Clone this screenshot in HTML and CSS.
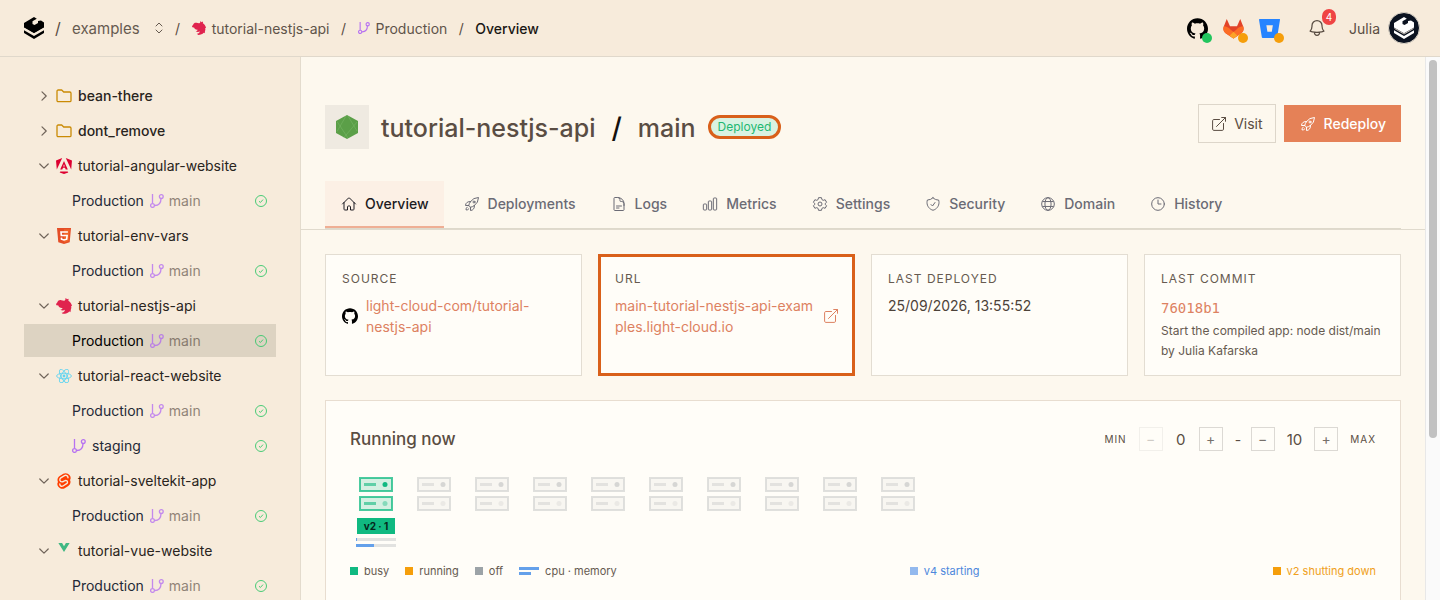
FILE: index.html
```html
<!DOCTYPE html>
<html lang="en">
<head>
<meta charset="utf-8">
<title>tutorial-nestjs-api / main - Overview</title>
<link rel="stylesheet" href="styles.css">
</head>
<body>
<svg class="sprite" aria-hidden="true">
  <symbol id="brand" viewBox="0 0 20 22">
    <path d="M10 0l2.800 1.700-4.300 2.600v2.600l2 1.200 3.500-2v-2l3-.6 3 2v5l-10 5.700-10-5.700V6z"/>
    <path d="M0 13.200l10 5.700 10-5.700v2.900L10 22 0 16.100z"/>
    <path class="brand-cut" d="M.5 11.500l9.500 5.500 9.500-5.500" fill="none" stroke-width=".8"/>
  </symbol>
  <symbol id="nest" viewBox="0 0 24 24"><path d="M0 9.500C.3 8 1.500 7.500 2.200 6 3 3.500 5.500 2.500 8 3.200c1.500.4 2.700 1 4.500.8C14 3.800 14.500 2 14 .5c1 0 2 .6 2.300 1.500L18.500 1c.6 1 .5 2 0 3C21.500 5.500 23.500 8.500 24 12c-.5-.2-1-.2-1.300 0 .5 2 .3 4-.5 5.500 0 1.500-.2 2.500-.7 3.700-.4-.5-.8-.9-1.500-1-2 2.300-5 3.600-9.500 3.600-.8-.5-1.500-1-2-1.800 3-.4 4.800-2 4.700-4.500-1.700 1.700-4.700 1.500-6.700 0 1.800-.2 3-1 3.200-2.500C6.500 15.500 4 13.500 3.500 11.200 2 11.500.5 11 0 9.500z"/></symbol>
  <symbol id="branch" viewBox="0 0 14 14"><g fill="none" stroke="currentColor" stroke-width="1.300"><path d="M2.500 0v9.300M4.700 11.500c4 0 6.300-2.500 6.300-7"/><circle cx="2.500" cy="11.500" r="1.900"/><circle cx="11.300" cy="2.600" r="1.900"/></g></symbol>
  <symbol id="github" viewBox="0 0 24 24"><path d="M12 .297c-6.630 0-12 5.373-12 12 0 5.303 3.438 9.800 8.205 11.385.6.113.82-.258.82-.577 0-.285-.01-1.040-.015-2.040-3.338.724-4.042-1.610-4.042-1.610C4.422 18.070 3.633 17.700 3.633 17.700c-1.087-.744.084-.729.084-.729 1.205.084 1.838 1.236 1.838 1.236 1.070 1.835 2.809 1.305 3.495.998.108-.776.417-1.305.76-1.605-2.665-.3-5.466-1.332-5.466-5.930 0-1.310.465-2.380 1.235-3.220-.135-.303-.54-1.523.105-3.176 0 0 1.005-.322 3.300 1.230.96-.267 1.980-.399 3-.405 1.020.006 2.040.138 3 .405 2.280-1.552 3.285-1.230 3.285-1.230.645 1.653.24 2.873.12 3.176.765.84 1.230 1.910 1.230 3.220 0 4.610-2.805 5.625-5.475 5.920.42.36.81 1.096.81 2.220 0 1.606-.015 2.896-.015 3.286 0 .315.21.69.825.57C20.565 22.092 24 17.592 24 12.297c0-6.627-5.373-12-12-12"/></symbol>
  <symbol id="gitlab" viewBox="0 0 24 24"><path fill="#e24329" d="M4.300 1L8 9.500h8L19.700 1 23 9.500c1.200 3 .5 6-2 8L12 23.500 3 17.500c-2.500-2-3.200-5-2-8z"/><path fill="#fc6d26" d="M1 9.500c3 0 5.500 1.500 7.500 3.500L12 16l3.500-3c2-2 4.500-3.500 7.500-3.500 1.200 3 .5 6-2 8L12 23.500 3 17.500c-2.500-2-3.200-5-2-8z"/><path fill="#fca326" d="M12 15.700l4.600 4.700L12 23.500l-4.600-3.100z"/></symbol>
  <symbol id="bitbucket" viewBox="0 0 20 18"><path fill="#2684ff" fill-rule="evenodd" d="M.6 0h18.800c.4 0 .7.300.6.7l-2.700 16.700c-.1.400-.3.600-.7.600H3.500c-.4 0-.7-.2-.8-.6L0 .7C0 .3.200 0 .6 0zM7 6l1 6h4.200l1-6z"/></symbol>
  <symbol id="folder" viewBox="0 0 16 14"><path fill="none" stroke="currentColor" stroke-width="1.300" stroke-linejoin="round" d="M1 11.500V2.200C1 1.500 1.500 1 2.200 1h3.500l2 2h6.100c.7 0 1.200.5 1.200 1.200v7.300c0 .7-.5 1.200-1.200 1.200H2.200c-.7 0-1.200-.5-1.200-1.200z"/></symbol>
  <symbol id="chevron" viewBox="0 0 10 10"><path fill="none" stroke="currentColor" stroke-width="1.200" stroke-linecap="round" stroke-linejoin="round" d="M.8 3l4.200 4.200L9.200 3"/></symbol>
  <symbol id="angular" viewBox="0 0 16 16"><path fill="#dd0031" d="M9.800 0L16 2.500l-.8 9zM6.200 0L0 2.500l.8 9zM4.300 13.500h7.400l.6 1L8 16l-4.300-1.500z"/><path fill="#dd0031" fill-rule="evenodd" d="M8 3l3.800 8.500H9.700L9 9.800H7l-.7 1.700H4.200zM8 6.200L7.200 8.400h1.600z"/></symbol>
  <symbol id="html5" viewBox="0 0 14 16"><path fill="#e44d26" d="M0 0h14l-1.300 14.300L7 16l-5.700-1.700z"/><path fill="#f16529" d="M7 1.300h5.700l-1.100 12L7 14.600z"/><path fill="none" stroke="#fff" stroke-width="1.600" d="M10.900 4H4l.3 3.500h5.800l-.4 3.700L7 12l-2.500-.8-.1-1.600"/></symbol>
  <symbol id="react" viewBox="0 0 16 14"><g fill="none" stroke="#61d4f0" stroke-width=".9"><ellipse cx="8" cy="7" rx="7.400" ry="2.800"/><ellipse cx="8" cy="7" rx="7.400" ry="2.800" transform="rotate(60 8 7)"/><ellipse cx="8" cy="7" rx="7.400" ry="2.800" transform="rotate(120 8 7)"/></g><circle cx="8" cy="7" r="1.400" fill="#61d4f0"/></symbol>
  <symbol id="svelte" viewBox="0 0 14 16"><path fill="#ff3e00" d="M12.600 2.200C11.200.2 8.300-.4 6.300.8L2.700 3.100C1.200 4 .4 5.600.5 7.200c.1.700.2 1.300.5 1.800-1 1.300-.9 3.300.4 4.800 1.400 2 4.300 2.600 6.300 1.400l3.600-2.300c1.500-.9 2.300-2.500 2.200-4.100-.1-.7-.2-1.300-.5-1.800 1-1.300.9-3.300-.4-4.800z"/><path fill="none" stroke="#f7ebdb" stroke-width="1.400" stroke-linecap="round" d="M11 4.700c0-1.800-1.900-2.900-3.500-2.100L3.800 4.900C2 6.200 2.800 8.800 4.900 8.900c1 0 1.700-.5 2.400-.9 1.400-.9 3.300-.4 3.200 1.200 0 .8-.4 1.200-.9 1.500L6 13c-1.500.8-3.300 0-3.200-2"/></symbol>
  <symbol id="vue" viewBox="0 0 10 8"><path fill="#41b883" d="M0 0h3.300L5 2.800 6.700 0H10L5 8z"/></symbol>
  <symbol id="check" viewBox="0 0 14 14"><g fill="none" stroke="currentColor" stroke-width=".9"><circle cx="7" cy="7" r="5.500"/><path d="M5 7.200l1.400 1.300 2.600-2.900"/></g></symbol>
  <symbol id="node" viewBox="0 0 22 24"><path fill="#5b9f48" d="M11 0l11 6v12l-11 6-11-6V6z"/><path fill="none" stroke="#7db96b" stroke-width=".5" d="M12 1l9 15M1 6.500l11 16.500M21 7L8 22.500M10 1L1 16.500"/></symbol>
  <symbol id="external" viewBox="0 0 14 14"><path fill="none" stroke="currentColor" stroke-width="1" stroke-linecap="round" stroke-linejoin="round" d="M7.500 2.500H1.800c-.7 0-1.200.5-1.200 1.200v8.500c0 .7.500 1.200 1.200 1.200h8.500c.7 0 1.200-.5 1.200-1.200V6.500M4.500 9.500l9-9M9.700.5h3.800v3.800"/></symbol>
  <symbol id="rocket" viewBox="0 0 24 24"><path fill="none" stroke="currentColor" stroke-width="1.500" stroke-linecap="round" stroke-linejoin="round" d="M15.590 14.370a6 6 0 01-5.840 7.380v-4.800m5.840-2.580a14.980 14.980 0 006.160-12.120A14.980 14.980 0 009.631 8.410m5.960 5.960a14.926 14.926 0 01-5.841 2.580m-.119-8.540a6 6 0 00-7.381 5.840h4.800m2.581-5.840a14.927 14.927 0 00-2.580 5.840m2.699 2.700c-.103.021-.207.041-.311.060a15.090 15.090 0 01-2.448-2.448 14.900 14.900 0 01.060-.312m-2.240 2.390a4.493 4.493 0 00-1.757 4.306 4.493 4.493 0 004.306-1.758M16.500 9a1.500 1.500 0 11-3 0 1.500 1.500 0 013 0z"/></symbol>
  <symbol id="bell" viewBox="0 0 24 24"><path fill="none" stroke="currentColor" stroke-width="1.500" stroke-linecap="round" stroke-linejoin="round" d="M14.857 17.082a23.848 23.848 0 005.454-1.310A8.967 8.967 0 0118 9.750V9A6 6 0 006 9v.75a8.967 8.967 0 01-2.312 6.022c1.733.64 3.560 1.085 5.455 1.310m5.714 0a24.255 24.255 0 01-5.714 0m5.714 0a3 3 0 11-5.714 0"/></symbol>
  <symbol id="sort" viewBox="0 0 10 14"><path fill="none" stroke="currentColor" stroke-width="1" stroke-linecap="round" stroke-linejoin="round" d="M2 5l3-3 3 3M2 9l3 3 3-3"/></symbol>
  <symbol id="home" viewBox="0 0 24 24"><path fill="none" stroke="currentColor" stroke-width="1.500" stroke-linecap="round" stroke-linejoin="round" d="M2.250 12l8.954-8.955c.44-.439 1.152-.439 1.591 0L21.750 12M4.500 9.750v10.125c0 .621.504 1.125 1.125 1.125H9.750v-4.875c0-.621.504-1.125 1.125-1.125h2.250c.621 0 1.125.504 1.125 1.125V21h4.125c.621 0 1.125-.504 1.125-1.125V9.750"/></symbol>
  <symbol id="doc" viewBox="0 0 24 24"><path fill="none" stroke="currentColor" stroke-width="1.500" stroke-linecap="round" stroke-linejoin="round" d="M19.500 14.250v-2.625a3.375 3.375 0 00-3.375-3.375h-1.500A1.125 1.125 0 0113.500 7.125v-1.500a3.375 3.375 0 00-3.375-3.375H5.625c-.621 0-1.125.504-1.125 1.125v17.250c0 .621.504 1.125 1.125 1.125h12.750c.621 0 1.125-.504 1.125-1.125V11.250a9 9 0 00-9-9M8.250 15h7.500M8.250 18H12"/></symbol>
  <symbol id="chart" viewBox="0 0 24 24"><g fill="none" stroke="currentColor" stroke-width="1.500"><rect x="2" y="12" width="5" height="9" rx="1.200"/><rect x="9.500" y="7.500" width="5" height="13.500" rx="1.200"/><rect x="17" y="3" width="5" height="18" rx="1.200"/></g></symbol>
  <symbol id="gear" viewBox="0 0 24 24"><g fill="none" stroke="currentColor" stroke-width="1.500" stroke-linejoin="round"><path d="M9.800 2.500h4.400l.7 2.900 1.900 1.100 2.900-.9 2.200 3.800-2.200 2v1.200l2.200 2-2.200 3.800-2.900-.9-1.900 1.100-.7 2.900H9.800l-.7-2.900-1.900-1.100-2.900.9-2.200-3.800 2.200-2v-1.200l-2.200-2 2.200-3.800 2.900.9 1.900-1.100z"/><circle cx="12" cy="12" r="3"/></g></symbol>
  <symbol id="shield" viewBox="0 0 24 24"><path fill="none" stroke="currentColor" stroke-width="1.500" stroke-linecap="round" stroke-linejoin="round" d="M9 12.750L11.250 15 15 9.750m-3-7.036A11.959 11.959 0 013.598 6 11.990 11.990 0 003 9.749c0 5.592 3.824 10.290 9 11.623 5.176-1.332 9-6.030 9-11.622 0-1.310-.21-2.571-.598-3.751h-.152c-3.196 0-6.100-1.248-8.250-3.285z"/></symbol>
  <symbol id="globe" viewBox="0 0 24 24"><g fill="none" stroke="currentColor" stroke-width="1.500"><circle cx="12" cy="12" r="9.500"/><ellipse cx="12" cy="12" rx="4.600" ry="9.500"/><path d="M3.500 8.300h17M3.500 15.700h17"/></g></symbol>
  <symbol id="clock" viewBox="0 0 24 24"><g fill="none" stroke="currentColor" stroke-width="1.500" stroke-linecap="round"><circle cx="12" cy="12" r="9.500"/><path d="M12 6v6h4.500"/></g></symbol>
  <symbol id="rack" viewBox="0 0 34 34"><g fill="currentColor"><path fill-opacity=".18" d="M1 1h32v13H1zM1 20h32v13H1z"/><path fill="none" stroke="currentColor" stroke-opacity=".75" stroke-width="2" d="M1 1h32v13H1zM1 20h32v13H1z"/><path fill-opacity=".6" d="M5 6h12v3H5zM5 25h12v3H5z"/><circle cx="26" cy="7.500" r="2.500"/><circle cx="26" cy="26.500" r="2.500" fill-opacity=".4"/></g></symbol>
</svg>

<div class="app">
  <header class="topbar">
    <nav class="crumbs" aria-label="Breadcrumb">
      <a href="#" class="logo" aria-label="Home"><svg><use href="#brand"/></svg></a>
      <span class="slash large">/</span>
      <button class="team">examples <svg><use href="#sort"/></svg></button>
      <span class="slash">/</span>
      <a href="#" class="crumb"><svg class="i14 nest"><use href="#nest"/></svg>tutorial-nestjs-api</a>
      <span class="slash">/</span>
      <a href="#" class="crumb"><svg class="i12 purple"><use href="#branch"/></svg>Production</a>
      <span class="slash">/</span>
      <span class="crumb current">Overview</span>
    </nav>
    <div class="tools">
      <a href="#" class="provider" aria-label="GitHub"><svg class="i20"><use href="#github"/></svg><i class="dot ok"></i></a>
      <a href="#" class="provider" aria-label="GitLab"><svg class="i20"><use href="#gitlab"/></svg><i class="dot"></i></a>
      <a href="#" class="provider" aria-label="Bitbucket"><svg class="i20"><use href="#bitbucket"/></svg><i class="dot"></i></a>
      <button class="bell" aria-label="Notifications"><svg class="i18"><use href="#bell"/></svg><span class="count">4</span></button>
      <button class="user">Julia <span class="avatar"><svg><use href="#brand"/></svg></span></button>
    </div>
  </header>

  <div class="body">
    <nav class="sidebar" aria-label="Projects">
      <a href="#" class="row strong"><svg class="chev closed"><use href="#chevron"/></svg><svg class="i16 folder"><use href="#folder"/></svg>bean-there</a>
      <a href="#" class="row strong"><svg class="chev closed"><use href="#chevron"/></svg><svg class="i16 folder"><use href="#folder"/></svg>dont_remove</a>
      <a href="#" class="row"><svg class="chev"><use href="#chevron"/></svg><svg class="i16"><use href="#angular"/></svg>tutorial-angular-website</a>
      <a href="#" class="row env">Production <span class="ref"><svg class="i14 purple"><use href="#branch"/></svg>main</span><svg class="i14 status"><use href="#check"/></svg></a>
      <a href="#" class="row"><svg class="chev"><use href="#chevron"/></svg><svg class="i16"><use href="#html5"/></svg>tutorial-env-vars</a>
      <a href="#" class="row env">Production <span class="ref"><svg class="i14 purple"><use href="#branch"/></svg>main</span><svg class="i14 status"><use href="#check"/></svg></a>
      <a href="#" class="row"><svg class="chev"><use href="#chevron"/></svg><svg class="i16 nest"><use href="#nest"/></svg>tutorial-nestjs-api</a>
      <a href="#" class="row env active" aria-current="page">Production <span class="ref"><svg class="i14 purple"><use href="#branch"/></svg>main</span><svg class="i14 status"><use href="#check"/></svg></a>
      <a href="#" class="row"><svg class="chev"><use href="#chevron"/></svg><svg class="i16"><use href="#react"/></svg>tutorial-react-website</a>
      <a href="#" class="row env">Production <span class="ref"><svg class="i14 purple"><use href="#branch"/></svg>main</span><svg class="i14 status"><use href="#check"/></svg></a>
      <a href="#" class="row env"><svg class="i14 purple"><use href="#branch"/></svg>staging<svg class="i14 status"><use href="#check"/></svg></a>
      <a href="#" class="row"><svg class="chev"><use href="#chevron"/></svg><svg class="i16"><use href="#svelte"/></svg>tutorial-sveltekit-app</a>
      <a href="#" class="row env">Production <span class="ref"><svg class="i14 purple"><use href="#branch"/></svg>main</span><svg class="i14 status"><use href="#check"/></svg></a>
      <a href="#" class="row"><svg class="chev"><use href="#chevron"/></svg><svg class="i16 vue"><use href="#vue"/></svg>tutorial-vue-website</a>
      <a href="#" class="row env">Production <span class="ref"><svg class="i14 purple"><use href="#branch"/></svg>main</span><svg class="i14 status"><use href="#check"/></svg></a>
    </nav>

    <main class="main">
      <section class="head">
        <div class="title-row">
          <span class="runtime"><svg><use href="#node"/></svg></span>
          <h1 class="title">tutorial-nestjs-api <span class="sep">/</span> main</h1>
          <span class="badge">Deployed</span>
          <div class="actions">
            <a href="#" class="btn"><svg class="i14"><use href="#external"/></svg>Visit</a>
            <button class="btn primary"><svg class="i16"><use href="#rocket"/></svg>Redeploy</button>
          </div>
        </div>
        <nav class="tabs" aria-label="Sections">
          <a href="#" class="tab on" aria-current="page"><svg class="i16"><use href="#home"/></svg>Overview</a>
          <a href="#" class="tab"><svg class="i16"><use href="#rocket"/></svg>Deployments</a>
          <a href="#" class="tab"><svg class="i16"><use href="#doc"/></svg>Logs</a>
          <a href="#" class="tab"><svg class="i16"><use href="#chart"/></svg>Metrics</a>
          <a href="#" class="tab"><svg class="i16"><use href="#gear"/></svg>Settings</a>
          <a href="#" class="tab"><svg class="i16"><use href="#shield"/></svg>Security</a>
          <a href="#" class="tab"><svg class="i16"><use href="#globe"/></svg>Domain</a>
          <a href="#" class="tab"><svg class="i16"><use href="#clock"/></svg>History</a>
        </nav>
      </section>

      <section class="cards">
        <article class="card">
          <h2 class="label">Source</h2>
          <div class="value"><svg class="i16"><use href="#github"/></svg><a href="#" class="link source">light-cloud-com/tutorial-nestjs-api</a></div>
        </article>
        <article class="card marked">
          <h2 class="label">URL</h2>
          <div class="value"><a href="#" class="link break">main-tutorial-nestjs-api-examples.light-cloud.io</a><svg class="i14 link"><use href="#external"/></svg></div>
        </article>
        <article class="card">
          <h2 class="label">Last deployed</h2>
          <div class="value">25/09/2026, 13:55:52</div>
        </article>
        <article class="card">
          <h2 class="label">Last commit</h2>
          <a href="#" class="link hash">76018b1</a>
          <p class="note">Start the compiled app: node dist/main</p>
          <p class="note">by Julia Kafarska</p>
        </article>
      </section>

      <section class="panel">
        <div class="panel-head">
          <h2 class="panel-title">Running now</h2>
          <div class="scale">
            <span class="cap">Min</span>
            <button class="step" disabled aria-label="Lower minimum">−</button>
            <output class="num">0</output>
            <button class="step" aria-label="Raise minimum">+</button>
            <span class="dash">-</span>
            <button class="step" aria-label="Lower maximum">−</button>
            <output class="num">10</output>
            <button class="step" aria-label="Raise maximum">+</button>
            <span class="cap">Max</span>
          </div>
        </div>
        <div class="servers">
          <div class="server busy"><svg><use href="#rack"/></svg><span class="tag">v2 · 1</span><div class="meters"><span class="meter"><i style="width:2%"></i></span><span class="meter"><i style="width:45%"></i></span></div></div>
          <div class="server"><svg><use href="#rack"/></svg></div>
          <div class="server"><svg><use href="#rack"/></svg></div>
          <div class="server"><svg><use href="#rack"/></svg></div>
          <div class="server"><svg><use href="#rack"/></svg></div>
          <div class="server"><svg><use href="#rack"/></svg></div>
          <div class="server"><svg><use href="#rack"/></svg></div>
          <div class="server"><svg><use href="#rack"/></svg></div>
          <div class="server"><svg><use href="#rack"/></svg></div>
          <div class="server"><svg><use href="#rack"/></svg></div>
        </div>
        <div class="legend">
          <div class="keys">
            <span class="key"><i class="sw green"></i>busy</span>
            <span class="key"><i class="sw amber"></i>running</span>
            <span class="key"><i class="sw gray"></i>off</span>
            <span class="key"><i class="lines"></i>cpu · memory</span>
          </div>
          <span class="key starting"><i class="sw blue"></i>v4 starting</span>
          <span class="key stopping"><i class="sw amber"></i>v2 shutting down</span>
        </div>
      </section>
    </main>
    <div class="scroll" aria-hidden="true"><div class="thumb"></div></div>
  </div>
</div>
</body>
</html>
```

FILE: styles.css
```css
* { box-sizing: border-box; }
body, h1, h2, p { margin: 0; }
body { font-family: Inter, "Liberation Sans", sans-serif; font-size: 14px; color: #5a4d43; background: #fdf8ee; }
a { color: inherit; text-decoration: none; }
button { font: inherit; color: inherit; background: none; border: 0; padding: 0; }
svg { display: block; flex: none; fill: currentColor; }
.sprite { position: absolute; width: 0; height: 0; }
.i12 { width: 12px; height: 12px; }
.i14 { width: 14px; height: 14px; }
.i16 { width: 16px; height: 16px; }
.i18 { width: 20px; height: 20px; }
.i20 { width: 21px; height: 21px; }
.nest { color: #e0234e; }
.purple { color: #a855f7; opacity: .8; }

.app { height: 100vh; display: flex; flex-direction: column; overflow: hidden; }
.topbar { height: 57px; flex: none; display: flex; align-items: center; justify-content: space-between; padding: 0 20px 0 24px; background: #f7ebdb; border-bottom: 1px solid #e0d8cb; }
.crumbs { display: flex; align-items: center; gap: 11px; }
.logo { color: #000; }
.logo svg { width: 20px; height: 22px; }
.brand-cut { stroke: #f7ebdb; }
.slash { width: 6px; text-align: center; }
.slash.large { font-size: 16px; }
.team { display: flex; align-items: center; gap: 14px; font-size: 15px; color: #665a50; }
.team svg { width: 10px; height: 14px; }
.crumb { display: flex; align-items: center; gap: 6px; color: #5f544a; }
.crumb.current { color: #1a1714; font-weight: 500; }
.tools { display: flex; align-items: center; color: #5a4d43; }
.provider { position: relative; margin-right: 15px; color: #000; }
.dot { position: absolute; right: -4px; bottom: -4px; width: 10px; height: 10px; border-radius: 50%; background: #f59e0b; }
.dot.ok { background: #22c55e; }
.bell { position: relative; margin: 0 22px 0 12px; }
.count { position: absolute; right: -9px; top: -9px; width: 14px; height: 16px; border-radius: 8px; background: #ef4444; color: #fff; font-size: 10px; line-height: 16px; text-align: center; }
.user { display: flex; align-items: center; gap: 8px; }
.avatar { width: 32px; height: 32px; border-radius: 50%; background: #0b1220; border: 1px solid #e0d8cb; color: #fff; display: grid; place-items: center; }
.avatar svg { width: 20px; height: 22px; }

.body { flex: 1; min-height: 0; display: flex; }
.sidebar { width: 301px; flex: none; display: flex; flex-direction: column; gap: 2px; padding: 22px 24px; background: #f7ebdb; border-right: 1px solid #e3dbcd; overflow: hidden; }
.row { flex: none; height: 33px; display: flex; align-items: center; gap: 6px; padding: 0 8px 0 15px; color: #292420; }
.strong { font-weight: 500; }
.chev { width: 10px; height: 10px; margin-right: 1px; color: #6f6359; }
.closed { transform: rotate(-90deg); }
.folder { color: #ca8a04; }
.vue { height: 9px; margin-bottom: 6px; }
.env { padding-left: 48px; color: #1f2937; }
.ref { display: flex; align-items: center; gap: 5px; opacity: .65; color: #5a4d43; }
.ref .purple { opacity: 1; }
.status { margin-left: auto; color: #35c76b; }
.active { background: #ddd3c2; color: #000; }

.main { flex: 1; min-width: 0; overflow: hidden; background: #fdf8ee; }
.head { padding: 48px 24px 0; border-bottom: 1px solid #e0dacd; }
.title-row { display: flex; align-items: center; gap: 12px; height: 44px; }
.runtime { width: 44px; height: 44px; display: grid; place-items: center; background: #efeae1; }
.runtime svg { width: 22px; height: 24px; }
.title { font-size: 25px; font-weight: 500; line-height: 32px; padding-top: 2px; display: flex; gap: 16px; align-items: center; }
.sep { color: #14110f; font-size: 28px; }
.badge { border: 3px solid #d9601a; border-radius: 12px; background: #d9f2e2; color: #22b872; font-size: 12px; line-height: 18px; padding: 0 7px; }
.actions { display: flex; align-items: center; gap: 8px; margin: 0 0 7px auto; }
.btn { display: flex; align-items: center; gap: 8px; height: 39px; padding: 0 12px 0 13px; border: 1px solid #ddd6ca; }
.primary { height: 37px; padding: 0 15px 0 16px; background: #e58157; border: 0; color: #fff; font-weight: 500; }
.tabs { display: flex; gap: 4px; margin-top: 32px; border-bottom: 1px solid #ded9cb; }
.tab { display: flex; align-items: center; gap: 8px; height: 47px; padding: 0 15px 0 16px; color: #6b6b75; font-weight: 500; border-bottom: 2px solid transparent; }
.tab.on { color: #1c1b22; background: #fcf0e5; border-color: #efae94; }

.cards { display: grid; grid-template-columns: repeat(4, 1fr); gap: 16px; padding: 24px; }
.card { padding: 16px 16px 14px; background: #fffdf8; border: 1px solid #e3ddd2; }
.marked { outline: 3px solid #d9601a; outline-offset: -3px; }
.label { font-size: 12px; font-weight: 400; line-height: 16px; letter-spacing: 1px; text-transform: uppercase; color: #665a50; margin-bottom: 8px; }
.value { display: flex; align-items: center; gap: 8px; line-height: 21px; color: #4d4239; }
.value > .i16 { color: #000; }
.source { width: 176px; }
.link, .value > .link { color: #dd8161; }
.break { word-break: break-all; flex: 1; }
.hash { display: block; font-family: "DejaVu Sans Mono", monospace; line-height: 26px; }
.note { font-size: 12px; line-height: 20px; color: #665a50; }

.panel { margin: 0 24px; padding: 24px; background: #fffdf8; border: 1px solid #e8ddd0; }
.panel-head { display: flex; align-items: center; justify-content: space-between; height: 28px; }
.panel-title { font-size: 17px; font-weight: 500; }
.scale { display: flex; align-items: center; gap: 12px; }
.cap { font-size: 10px; letter-spacing: 1px; text-transform: uppercase; }
.step { width: 24px; height: 24px; border: 1px solid #dcd9d4; color: #77706a; font-size: 14px; line-height: 20px; }
.step:disabled { opacity: .35; }
.num { min-width: 12px; font-size: 15px; text-align: center; }
.dash { width: 4px; }
.servers { display: flex; gap: 6px; height: 71px; margin-top: 24px; }
.server { width: 52px; display: flex; flex-direction: column; align-items: center; color: #d6d6d4; }
.server svg { width: 34px; height: 34px; }
.busy { color: #10b981; }
.tag { margin: 7px 0 4px; padding: 0 7px; height: 16px; background: #10b981; color: #05271c; font-size: 10px; font-weight: 700; line-height: 16px; white-space: nowrap; }
.meters { width: 40px; display: flex; flex-direction: column; gap: 3px; }
.meter { height: 3px; background: #e2e2e0; }
.meter i { display: block; height: 3px; background: #64a0ea; }
.legend { display: flex; justify-content: space-between; margin-top: 14px; font-size: 11px; line-height: 18px; color: #665a50; }
.keys { display: flex; gap: 16px; }
.key { display: flex; align-items: center; gap: 6px; }
.sw { width: 8px; height: 8px; }
.green { background: #10b981; }
.amber { background: #f59e0b; }
.gray { background: #9ca3a7; }
.blue { background: #93b9ee; }
.lines { width: 20px; height: 8px; background: linear-gradient(#64a0ea, #64a0ea) 0 0 / 20px 3px no-repeat, linear-gradient(#64a0ea, #64a0ea) 0 5px / 12px 3px no-repeat; }
.starting { color: #4d87dc; }
.stopping { color: #f0a020; }

.scroll { width: 15px; flex: none; padding: 3px 3px 0; background: #fafafa; border-left: 1px solid #e8e8e8; }
.thumb { width: 8px; height: 378px; border-radius: 4px; background: #c1c1c1; }
```
